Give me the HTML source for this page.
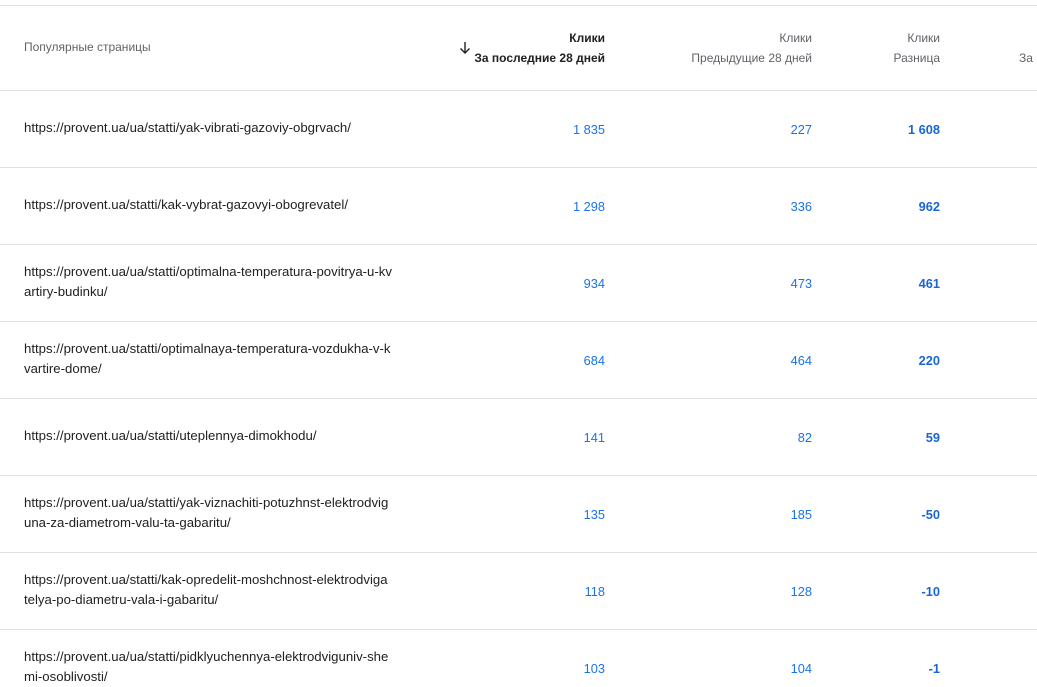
<!DOCTYPE html>
<html><head><meta charset="utf-8"><style>
html,body{margin:0;padding:0;background:#fff;width:1037px;height:686px;overflow:hidden;font-family:"Liberation Sans",Arial,sans-serif;}
.l{position:absolute;left:0;width:1037px;height:1px;background:#e0e0e0;}
.h{position:absolute;font-size:12px;color:#5f6368;white-space:nowrap;text-align:right;line-height:20px;}
.n{position:absolute;font-size:12.8px;color:#1a73e8;text-align:right;white-space:nowrap;}
.u{position:absolute;left:24px;font-size:13.2px;color:#202124;line-height:20px;white-space:nowrap;}
</style></head><body>
<div class="l" style="top:5px"></div>
<div class="l" style="top:90px"></div>
<div class="h" style="left:24px;top:37px;text-align:left;">Популярные страницы</div>
<div class="h" style="right:432px;top:28px;color:#202124;font-weight:bold;">Клики<br>За последние 28 дней</div>
<svg style="position:absolute;left:459px;top:41px" width="12" height="14" viewBox="0 0 12 14"><path d="M6 1V12M1.5 7.5L6 12L10.5 7.5" stroke="#202124" stroke-width="1.4" fill="none"/></svg>
<div class="h" style="right:225px;top:28px;">Клики<br>Предыдущие 28 дней</div>
<div class="h" style="right:97px;top:28px;">Клики<br>Разница</div>
<div class="h" style="left:1019px;top:48px;text-align:left;">За</div>

<div id="rows"></div>
<script>
var d=[["https://provent.ua/ua/statti/yak-vibrati-gazoviy-obgrvach/","1 835","227","1 608"],
["https://provent.ua/statti/kak-vybrat-gazovyi-obogrevatel/","1 298","336","962"],
["https://provent.ua/ua/statti/optimalna-temperatura-povitrya-u-kv<br>artiry-budinku/","934","473","461"],
["https://provent.ua/statti/optimalnaya-temperatura-vozdukha-v-k<br>vartire-dome/","684","464","220"],
["https://provent.ua/ua/statti/uteplennya-dimokhodu/","141","82","59"],
["https://provent.ua/ua/statti/yak-viznachiti-potuzhnst-elektrodvig<br>una-za-diametrom-valu-ta-gabaritu/","135","185","-50"],
["https://provent.ua/statti/kak-opredelit-moshchnost-elektrodviga<br>telya-po-diametru-vala-i-gabaritu/","118","128","-10"],
["https://provent.ua/ua/statti/pidklyuchennya-elektrodviguniv-she<br>mi-osoblivosti/","103","104","-1"]];
var h="";
for(var i=0;i<d.length;i++){
 var c=129+77*i, two=d[i][0].indexOf("<br>")>0;
 h+='<div class="u" style="top:'+(two?c-21:c-11)+'px">'+d[i][0]+'</div>';
 h+='<div class="n" style="right:432px;top:'+(c-7)+'px">'+d[i][1]+'</div>';
 h+='<div class="n" style="right:225px;top:'+(c-7)+'px">'+d[i][2]+'</div>';
 h+='<div class="n" style="right:97px;top:'+(c-7)+'px;font-weight:bold;color:#1967d2">'+d[i][3]+'</div>';
 if(i<7) h+='<div class="l" style="top:'+(167+77*i)+'px"></div>';
}
document.getElementById("rows").innerHTML=h;
</script>
</body></html>
